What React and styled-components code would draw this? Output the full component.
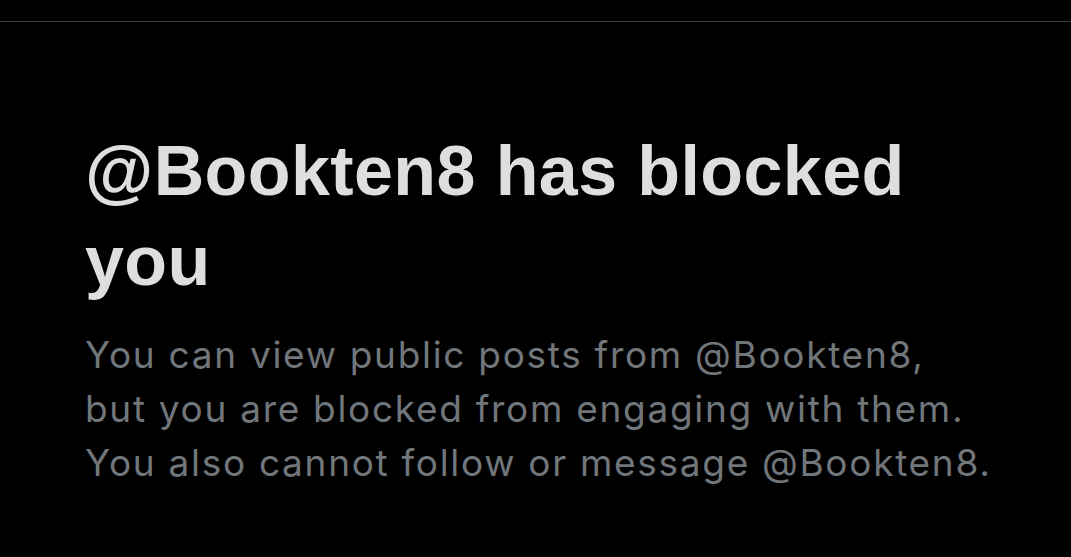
import React from "react";
import styled, { createGlobalStyle } from "styled-components";

const GlobalStyle = createGlobalStyle`
  html, body {
    margin: 0;
    padding: 0;
    background: #000000;
  }
`;

const Page = styled.div`
  width: 1071px;
  height: 557px;
  background: #000000;
  display: flex;
  flex-direction: column;
  overflow: hidden;
`;

const TopBar = styled.div`
  height: 21px;
  border-bottom: 1px solid #3b3b3b;
`;

const Content = styled.div`
  padding: 104px 40px 0 85px;
  display: flex;
  flex-direction: column;
`;

const Title = styled.h1`
  margin: 0;
  font-family: "Liberation Sans", Arial, sans-serif;
  font-weight: 700;
  font-size: 70px;
  letter-spacing: 0.4px;
  line-height: 90px;
  color: #dedede;
  max-width: 880px;
`;

const Message = styled.p`
  margin: 22px 0 0;
  font-family: Inter, "Open Sans", sans-serif;
  font-weight: 400;
  font-size: 37px;
  letter-spacing: 1.7px;
  line-height: 54px;
  color: #71767b;
  white-space: nowrap;
`;

export default function App() {
  return (
    <Page>
      <GlobalStyle />
      <TopBar />
      <Content>
        <Title>@Bookten8 has blocked you</Title>
        <Message>
          You can view public posts from @Bookten8,
          <br />
          but you are blocked from engaging with them.
          <br />
          You also cannot follow or message @Bookten8.
        </Message>
      </Content>
    </Page>
  );
}
